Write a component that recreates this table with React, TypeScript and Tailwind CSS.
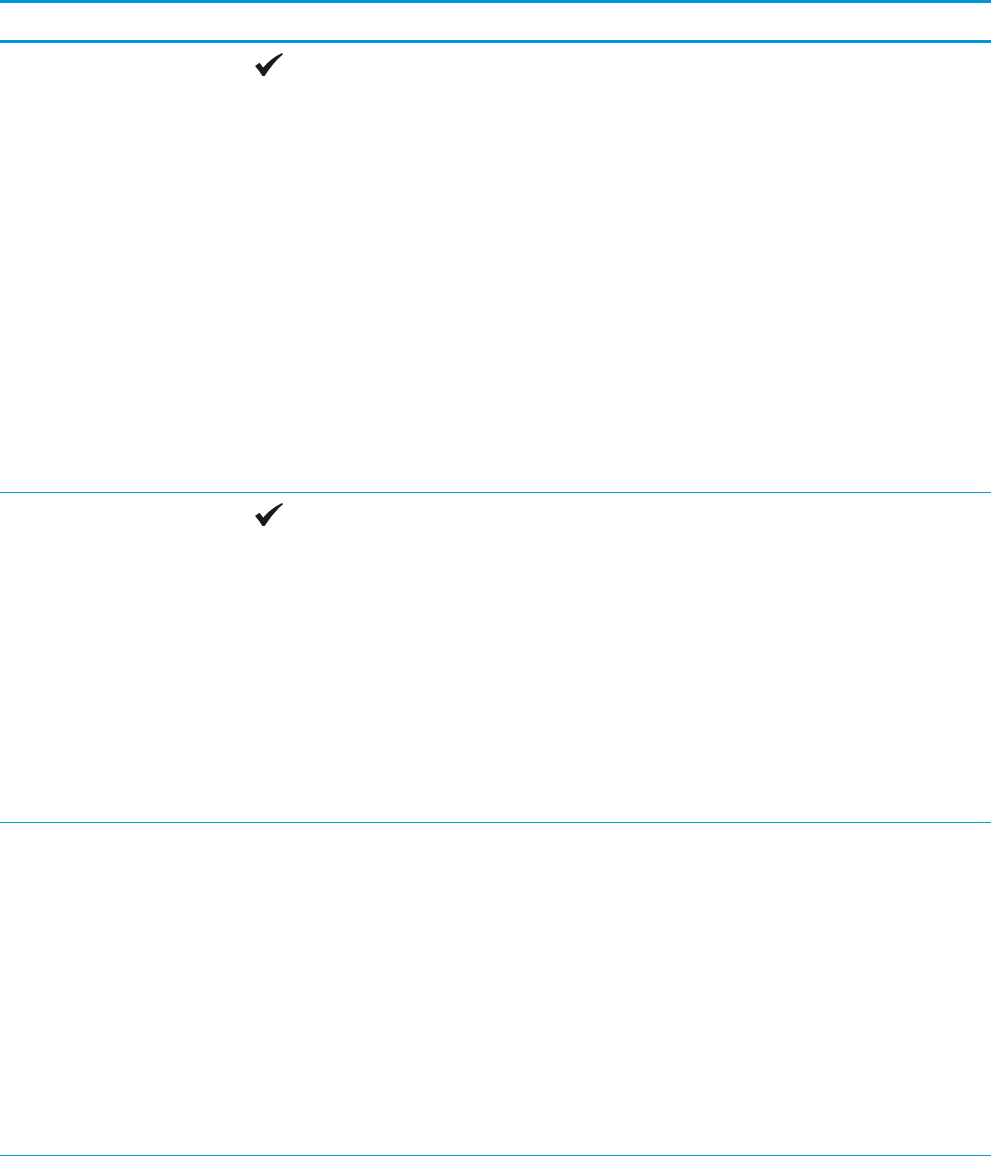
const rows = [
  { check: true, height: 'h-[450px]' },
  { check: true, height: 'h-[330px]' },
  { check: false, height: 'h-[333px]' },
];

function Check() {
  return (
    <svg width="28" height="24" viewBox="0 0 28 24" className="block">
      <path
        d="M0 13 L4.5 9.8 L8.2 14.6 Q15.5 5.5 27 0 L28 1.2 Q18.5 9.2 9.6 23 L7.4 23 Q4.2 17.6 0 13 Z"
        fill="#1a1a1a"
      />
    </svg>
  );
}

export default function App() {
  return (
    <div className="w-[992px] h-[1156px] bg-white font-['Liberation_Sans',sans-serif]">
      <div className="w-[991px]">
        <div className="h-[43px] border-t-[3px] border-b-[3px] border-[#0096d6]" />
        {rows.map((row, i) => (
          <div key={i} className={`${row.height} border-b border-[#0096d6] grid grid-cols-[255px_1fr]`}>
            <div />
            <div className="pt-[10px]">{row.check && <Check />}</div>
          </div>
        ))}
      </div>
    </div>
  );
}
